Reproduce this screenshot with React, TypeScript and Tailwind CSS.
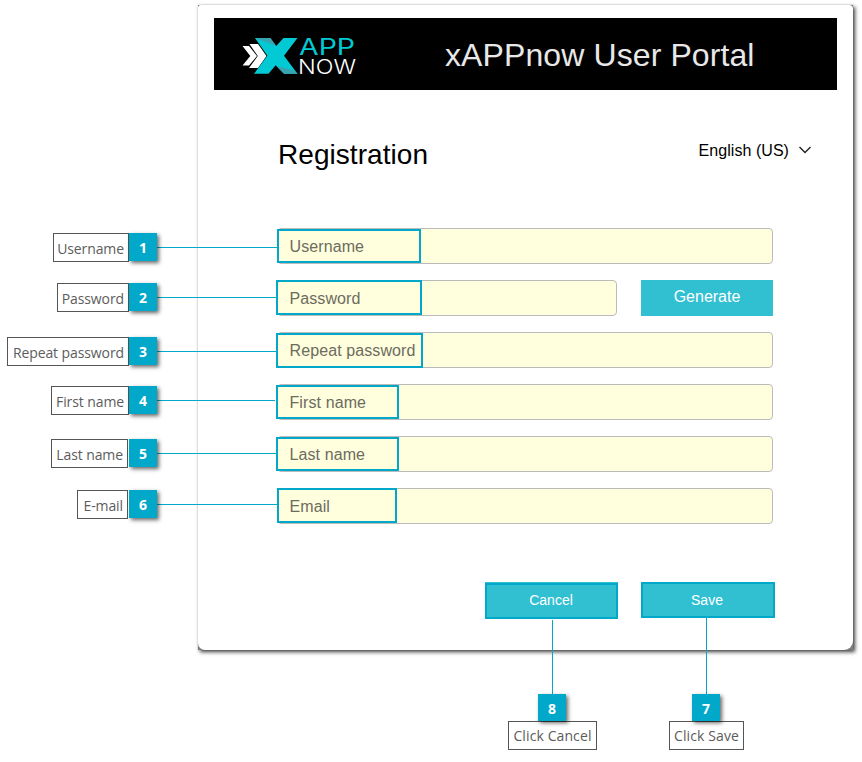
import React from 'react';
import { clsx } from 'clsx';

interface Callout {
  num: number;
  label: string;
  row: string;
  box: string;
}

interface Field {
  label: string;
  mark: string;
  width: string;
  generate?: boolean;
}

const CALLOUTS: Callout[] = [
  { num: 1, label: 'Username', row: 'mt-[233px] w-[277px]', box: 'w-[76px]' },
  { num: 2, label: 'Password', row: 'mt-[21px] w-[276px]', box: 'w-[72px]' },
  { num: 3, label: 'Repeat password', row: 'mt-[25px] w-[276px]', box: 'w-[122px]' },
  { num: 4, label: 'First name', row: 'mt-[20px] w-[275px]', box: 'w-[78px]' },
  { num: 5, label: 'Last name', row: 'mt-[24px] w-[276px]', box: 'mr-px w-[77px]' },
  { num: 6, label: 'E-mail', row: 'mt-[22px] w-[277px]', box: 'mr-px w-[51px]' },
];

const FIELDS: Field[] = [
  { label: 'Username', mark: 'left-0 top-px h-[34px] w-[144px]', width: 'w-[496px]' },
  { label: 'Password', mark: '-left-px top-0 h-[35px] w-[146px]', width: 'w-[340px]', generate: true },
  { label: 'Repeat password', mark: '-left-px top-px h-[35px] w-[147px]', width: 'w-[496px]' },
  { label: 'First name', mark: '-left-px top-px h-[34px] w-[123px]', width: 'w-[496px]' },
  { label: 'Last name', mark: '-left-px top-px h-[34px] w-[123px]', width: 'w-[496px]' },
  { label: 'Email', mark: 'left-0 top-0 h-[35px] w-[120px]', width: 'w-[496px]' },
];

const App: React.FC = () => {
  return (
    <div className="flex h-[762px] w-[862px] overflow-hidden bg-white font-['Liberation_Sans',Arial,sans-serif]">
      {/* Left callouts, their lines run over the card edge */}
      <div className="relative z-10 w-[198px] shrink-0">
        {CALLOUTS.map(c => (
          <div key={c.num} className={clsx('flex h-[29px] items-start', c.row)}>
            <div className="flex w-[129px] shrink-0 justify-end">
              <CalloutLabel label={c.label} className={clsx(c.box, 'justify-end pr-1 pt-[3px] tracking-[-0.1px]')} />
            </div>
            <CalloutBadge num={c.num} className="h-7" />
            <div className="mt-[14px] h-px flex-1 bg-[#02a8ca]" />
          </div>
        ))}
      </div>

      <div className="w-[655px] shrink-0 pt-[5px]">
        <div className="h-[645px] bg-[#7c7c7c] shadow-[2px_2px_4px_rgba(0,0,0,0.75),0_0_2px_rgba(0,0,0,0.15)]">
          <div className="h-full rounded-[3px_4px_9px_7px] bg-white px-4 pt-[13px]">
            <header className="flex h-[72px] w-[623px] items-center bg-black">
              <Logo />
              <h1 className="ml-[83px] whitespace-nowrap pt-[2px] text-[32px] leading-[38px] tracking-[0.1px] text-[#e8e8e8]">
                xAPPnow User Portal
              </h1>
            </header>

            <div className="mt-[46px] flex justify-between pl-[64px] pr-[25px]">
              <h2 className="mt-px text-[28px] leading-[36px] tracking-[0.05px] text-black">Registration</h2>
              <div className="flex h-[30px] items-center gap-[9px] text-[16px] text-black">
                <span className="whitespace-nowrap tracking-[0.05px]">English (US)</span>
                <svg className="-mt-[2px]" width="14" height="10" viewBox="0 0 14 10" fill="none">
                  <path d="M1.5 2 L7 7.5 L12.5 2" stroke="#222" strokeWidth="1.4" />
                </svg>
              </div>
            </div>

            <form className="mt-[55px] flex flex-col gap-4 pl-[63px]">
              {FIELDS.map(f => (
                <FieldRow key={f.label} field={f} />
              ))}
            </form>

            <div className="mt-[58px] flex gap-[23px] pl-[271px]">
              <div className="h-[37px] w-[133px] bg-[#31bfd2] pt-px">
                <button className="block h-[36px] w-full border-2 border-[#02a8ca] bg-[#31bfd2] pb-[2px] pr-px text-[14px] leading-[30px] text-white">
                  Cancel
                </button>
              </div>
              <button className="h-[36px] w-[134px] border-2 border-[#02a8ca] bg-[#31bfd2] pr-[2px] text-[14px] leading-[32px] text-white">
                Save
              </button>
            </div>

            {/* Callouts below the buttons */}
            <div className="relative z-10 flex items-end pl-[294px]">
              <BottomCallout num={8} label="Click Cancel" box="w-[89px]" line="mt-px h-[74px]" />
              <BottomCallout num={7} label="Click Save" box="ml-[72px] w-[75px]" line="-mt-px h-[76px]" />
            </div>
          </div>
        </div>
      </div>
    </div>
  );
};

/* ===================== HELPERS ===================== */

const FieldRow: React.FC<{ field: Field }> = ({ field }) => (
  <div className="flex h-9 gap-6">
    <div
      className={clsx(
        'relative flex h-9 items-center rounded-[4px] border border-[#bbb] bg-[#fffedd] pl-[11.5px]',
        field.width
      )}
    >
      <span className="whitespace-nowrap pt-[2px] text-[16px] tracking-[0.1px] text-[#6c6c60]">{field.label}</span>
      <div className={clsx('absolute -m-px border-2 border-[#02a8ca]', field.mark)} />
    </div>
    {field.generate && (
      <button type="button" className="h-9 w-[132px] bg-[#31bfd2] pb-[2px] text-[16px] leading-[34px] text-white">
        Generate
      </button>
    )}
  </div>
);

const CalloutLabel: React.FC<{ label: string; className: string }> = ({ label, className }) => (
  <div
    className={clsx(
      "flex h-[29px] items-center whitespace-nowrap border border-[#555] bg-white font-['Open_Sans',sans-serif] text-[14px] leading-5 text-[#5c5c5c]",
      className
    )}
  >
    {label}
  </div>
);

const CalloutBadge: React.FC<{ num: number; className: string }> = ({ num, className }) => (
  <div
    className={clsx(
      "relative flex w-7 shrink-0 items-center justify-center bg-[#02a8ca] pt-px font-['Open_Sans',sans-serif] text-[14px] font-bold text-white shadow-[2px_2px_4px_rgba(0,0,0,0.6)]",
      className
    )}
  >
    {num}
  </div>
);

const BottomCallout: React.FC<{ num: number; label: string; box: string; line: string }> = ({
  num,
  label,
  box,
  line,
}) => (
  <div className={clsx('flex flex-col items-center', box)}>
    <div className={clsx('w-px bg-[#02a8ca]', line)} />
    <CalloutBadge num={num} className="z-10 mr-px h-[27px]" />
    <CalloutLabel label={label} className="w-full justify-center pt-px tracking-[0.1px]" />
  </div>
);

const Logo: React.FC = () => (
  <svg className="ml-7 shrink-0" width="120" height="60" viewBox="242 24 120 60">
    <path d="M242.5 46H249L257 56L249 65.5H242.5L250.3 56Z" fill="#fff" />
    <path d="M249.5 44H258L266.5 56L258 68H249L257.8 56Z" fill="#fff" />
    <path
      d="M255 38H270L276.2 46L283.5 38H297.5L284 55.7L297.5 73.8H284L275.7 65.3L268.5 73.8H254L267.4 55.7Z"
      fill="#02cad4"
    />
    <path d="M255 38H270.5L276 45.8Z" fill="#3aa3b0" />
    <path d="M276.5 66.2L293 70L297.5 73.8H284Z" fill="#3aa3b0" />
    <text
      x="299"
      y="55"
      fontFamily="Inter, sans-serif"
      fontSize="22.5"
      fontWeight="400"
      fill="#02cad4"
      textLength="56"
      lengthAdjust="spacingAndGlyphs"
    >
      APP
    </text>
    <text
      x="298"
      y="73.8"
      fontFamily="Inter, sans-serif"
      fontSize="20.5"
      fontWeight="300"
      fill="#fff"
      textLength="58"
      lengthAdjust="spacingAndGlyphs"
    >
      NOW
    </text>
  </svg>
);

export default App;
